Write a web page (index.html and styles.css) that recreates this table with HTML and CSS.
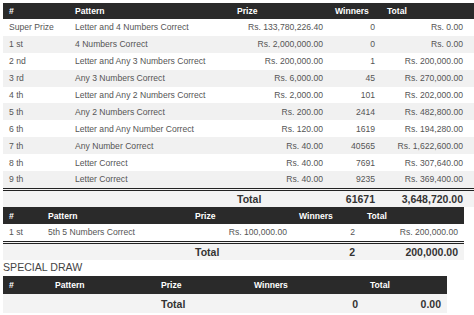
FILE: index.html
```html
<!DOCTYPE html>
<html>
<head>
<meta charset="utf-8">
<link rel="stylesheet" href="styles.css">
</head>
<body>
<table class="res res-main">
  <colgroup><col class="c1"><col class="c2"><col class="c3"><col class="c4"><col class="c5"></colgroup>
  <thead><tr><th>#</th><th>Pattern</th><th>Prize</th><th>Winners</th><th>Total</th></tr></thead>
  <tbody>
    <tr><td>Super Prize</td><td>Letter and 4 Numbers Correct</td><td class="num">Rs. 133,780,226.40</td><td class="num">0</td><td class="num">Rs. 0.00</td></tr>
    <tr><td>1 st</td><td>4 Numbers Correct</td><td class="num">Rs. 2,000,000.00</td><td class="num">0</td><td class="num">Rs. 0.00</td></tr>
    <tr><td>2 nd</td><td>Letter and Any 3 Numbers Correct</td><td class="num">Rs. 200,000.00</td><td class="num">1</td><td class="num">Rs. 200,000.00</td></tr>
    <tr><td>3 rd</td><td>Any 3 Numbers Correct</td><td class="num">Rs. 6,000.00</td><td class="num">45</td><td class="num">Rs. 270,000.00</td></tr>
    <tr><td>4 th</td><td>Letter and Any 2 Numbers Correct</td><td class="num">Rs. 2,000.00</td><td class="num">101</td><td class="num">Rs. 202,000.00</td></tr>
    <tr><td>5 th</td><td>Any 2 Numbers Correct</td><td class="num">Rs. 200.00</td><td class="num">2414</td><td class="num">Rs. 482,800.00</td></tr>
    <tr><td>6 th</td><td>Letter and Any Number Correct</td><td class="num">Rs. 120.00</td><td class="num">1619</td><td class="num">Rs. 194,280.00</td></tr>
    <tr><td>7 th</td><td>Any Number Correct</td><td class="num">Rs. 40.00</td><td class="num">40565</td><td class="num">Rs. 1,622,600.00</td></tr>
    <tr><td>8 th</td><td>Letter Correct</td><td class="num">Rs. 40.00</td><td class="num">7691</td><td class="num">Rs. 307,640.00</td></tr>
    <tr><td>9 th</td><td>Letter Correct</td><td class="num">Rs. 40.00</td><td class="num">9235</td><td class="num">Rs. 369,400.00</td></tr>
  </tbody>
  <tfoot><tr><td></td><td></td><td>Total</td><td class="num">61671</td><td class="num">3,648,720.00</td></tr></tfoot>
</table>

<table class="res res-second">
  <colgroup><col class="c1"><col class="c2"><col class="c3"><col class="c4"><col class="c5"></colgroup>
  <thead><tr><th>#</th><th>Pattern</th><th>Prize</th><th>Winners</th><th>Total</th></tr></thead>
  <tbody>
    <tr><td>1 st</td><td>5th 5 Numbers Correct</td><td class="num">Rs. 100,000.00</td><td class="num">2</td><td class="num">Rs. 200,000.00</td></tr>
  </tbody>
  <tfoot><tr><td></td><td></td><td>Total</td><td class="num">2</td><td class="num">200,000.00</td></tr></tfoot>
</table>

<div class="section-title">SPECIAL DRAW</div>

<table class="res res-special">
  <colgroup><col class="c1"><col class="c2"><col class="c3"><col class="c4"><col class="c5"></colgroup>
  <thead><tr><th>#</th><th>Pattern</th><th>Prize</th><th>Winners</th><th>Total</th></tr></thead>
  <tfoot><tr><td></td><td></td><td>Total</td><td class="num">0</td><td class="num">0.00</td></tr></tfoot>
</table>
</body>
</html>
```

FILE: styles.css
```css
html, body {
  background: #fff;
}
body {
  margin: 3px 0 0 3px;
  font-family: "Liberation Sans", Arial, sans-serif;
  color: #555;
}
.res {
  border-collapse: collapse;
  table-layout: fixed;
  font-size: 8.6px;
}
.res th,
.res td {
  padding: 0 6px;
  white-space: nowrap;
  text-align: left;
}
.res th {
  background: #2a2a2a;
  color: #fff;
  font-weight: bold;
  font-size: 8.6px;
  height: 16px;
}
.res tbody td {
  height: 16.9px;
}
.res tbody tr:nth-child(even) td {
  background: #f1f1f1;
}
.res td.num {
  text-align: right;
}
.res tfoot td {
  background: #f3f3f3;
  color: #333;
  font-weight: bold;
  font-size: 10.5px;
  height: 16.5px;
  border-top: 3px double #222;
}

.res-main { width: 471px; }
.res-main .c1 { width: 66px; }
.res-main .c2 { width: 162px; }
.res-main .c3 { width: 98px; }
.res-main .c4 { width: 52px; }
.res-main .c5 { width: 93px; }
.res-main th:last-child,
.res-main td:last-child { padding-right: 11px; }

.res-second { width: 461px; }
.res-second th { height: 16.5px; }
.res-second .c1 { width: 39px; }
.res-second .c2 { width: 147px; }
.res-second .c3 { width: 104px; }
.res-second .c4 { width: 68px; }
.res-second .c5 { width: 103px; }

.section-title {
  font-size: 10.6px;
  color: #444;
  height: 16px;
  line-height: 14px;
}

.res-special { width: 444px; }
.res-special th { height: 18px; }
.res-special tfoot td { border-top: 0; height: 19px; }
.res-special .c1 { width: 46px; }
.res-special .c2 { width: 106px; }
.res-special .c3 { width: 93px; }
.res-special .c4 { width: 116px; }
.res-special .c5 { width: 83px; }
```
